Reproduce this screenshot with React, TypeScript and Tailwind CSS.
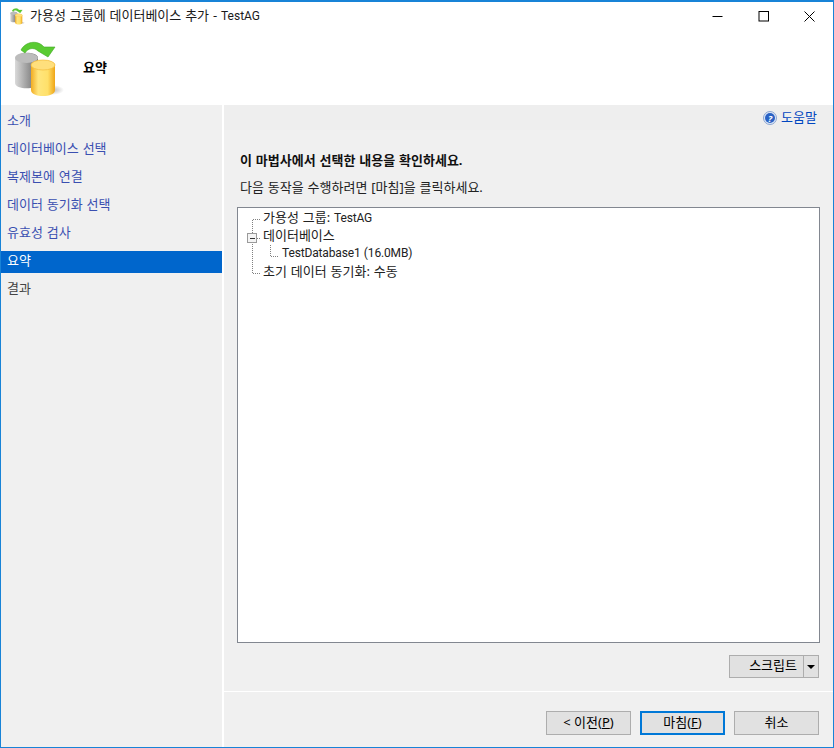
import React from 'react';

const FONT = "font-['Noto_Sans','Noto_Sans_CJK_KR',sans-serif]";

const pages = ['소개', '데이터베이스 선택', '복제본에 연결', '데이터 동기화 선택', '유효성 검사', '요약', '결과'];

// Latin runs are narrower than the Korean text around them
const L: React.FC<{ children: React.ReactNode }> = ({ children }) => (
  <span className="font-['Roboto',sans-serif] text-[12px]">{children}</span>
);

const TreeL: React.FC<{ children: React.ReactNode }> = ({ children }) => (
  <span className="font-['Roboto',sans-serif] text-[12px] tracking-[-0.15px]">{children}</span>
);

// Wizard icon: grey and yellow cylinders under a green arrow
const DbIcon: React.FC<{ w: number; h: number; id: string }> = ({ w, h, id }) => (
  <svg width={w} height={h} viewBox="0 0 50 56">
    <defs>
      <linearGradient id={`${id}g`} x1="0" x2="1" y1="0" y2="0">
        <stop offset="0" stopColor="#dadada" />
        <stop offset="0.45" stopColor="#a6a6a6" />
        <stop offset="1" stopColor="#686868" />
      </linearGradient>
      <linearGradient id={`${id}y`} x1="0" x2="1" y1="0" y2="0">
        <stop offset="0" stopColor="#f2ac22" />
        <stop offset="0.3" stopColor="#ffe67e" />
        <stop offset="0.7" stopColor="#ffe06a" />
        <stop offset="1" stopColor="#efa516" />
      </linearGradient>
      <radialGradient id={`${id}s`} cx="0.5" cy="0.5" r="0.5">
        <stop offset="0" stopColor="#888" stopOpacity="0.6" />
        <stop offset="1" stopColor="#888" stopOpacity="0" />
      </radialGradient>
    </defs>
    <ellipse cx="38" cy="49" rx="12" ry="5" fill={`url(#${id}s)`} />
    <path d="M1 17 C1 10 24 10 24 17 V42 C24 49 1 49 1 42 Z" fill={`url(#${id}g)`} />
    <ellipse cx="12.5" cy="17" rx="11.5" ry="5" fill="#bcbcbc" />
    <path d="M17 25 C17 17 41 17 41 25 V49 C41 57 17 57 17 49 Z" fill={`url(#${id}y)`} />
    <ellipse cx="29" cy="24" rx="12" ry="5" fill="#ffdf7c" stroke="#f3bb3c" strokeWidth="0.7" />
    <path d="M7 9 C11 1 23 -2 30 6 L41 6 L34 16 L24 10 C20 6 14 7 11 12 Z" fill="#5acb32" stroke="#3fa822" strokeWidth="0.6" />
  </svg>
);

const Help = () => (
  <svg width="14" height="14" viewBox="0 0 14 14">
    <circle cx="7" cy="7" r="6.5" fill="#dfe8f7" stroke="#8aa4d0" />
    <circle cx="7" cy="7" r="5" fill="#2a62c4" />
    <text x="7" y="10.5" textAnchor="middle" fontSize="9" fontStyle="italic" fontWeight="700" fill="#fff">?</text>
  </svg>
);

const TreeLines = () => (
  <svg className="absolute left-0 top-0" width="60" height="80" shapeRendering="crispEdges">
    <g stroke="#808080" strokeWidth="1" strokeDasharray="1 1" fill="none">
      <path d="M14.5 11.5 V65.5 H22" />
      <path d="M14.5 11.5 H22" />
      <path d="M18.5 30.5 H22" />
      <path d="M32.5 37 V48.5 H41" />
    </g>
    <rect x="9.5" y="25.5" width="9" height="9" fill="#f4f4f4" stroke="#9a9a9a" />
    <path d="M11.5 30.5 H16.5" stroke="#333" />
  </svg>
);

const Btn: React.FC<{ children: React.ReactNode; primary?: boolean }> = ({ children, primary }) => (
  <button className={primary
    ? 'w-[85px] h-[24px] pb-[2px] bg-[#e1e1e1] border-2 border-[#0078d7] text-[13px] text-black'
    : 'w-[85px] h-[24px] pb-[2px] bg-[#e1e1e1] border border-[#adadad] text-[13px] text-black'}>
    {children}
  </button>
);

export default function App() {
  return (
    <div className={`${FONT} w-[834px] h-[748px] flex flex-col bg-white border border-[#1883d7] border-t-2 text-[13px] leading-none [word-spacing:0.5px] overflow-hidden`}>
      {/* Title bar */}
      <div className="h-[28px] shrink-0 flex items-center pl-[9px] bg-white">
        <DbIcon w={15} h={17} id="small" />
        <span className="ml-[5px] mb-[2px] text-[#1a1a1a]">가용성 그룹에 데이터베이스 추가 - <L>TestAG</L></span>
        <div className="ml-auto flex items-center gap-[35px] pr-[18px]">
          <svg width="11" height="11" viewBox="0 0 11 11"><path d="M0.5 5.5 H10.5" stroke="#000" /></svg>
          <svg width="11" height="11" viewBox="0 0 11 11"><rect x="1" y="0.5" width="9.5" height="9.5" fill="none" stroke="#000" /></svg>
          <svg width="11" height="11" viewBox="0 0 11 11"><path d="M0.5 0.5 L10.5 10.5 M10.5 0.5 L0.5 10.5" stroke="#000" /></svg>
        </div>
      </div>

      {/* Header */}
      <div className="h-[75px] shrink-0 flex items-center bg-white pl-[13px] pt-[2px]">
        <DbIcon w={50} h={56} id="big" />
        <span className="ml-[19px] mb-[2px] font-bold text-black">요약</span>
      </div>

      <div className="flex-1 flex min-h-0">
        {/* Page list */}
        <div className="w-[221px] shrink-0 bg-[#f0f0f0] pt-[6px]">
          {pages.map((p) => (
            <div
              key={p}
              className={p === '요약'
                ? 'h-[22px] mb-[6px] pl-[6px] pb-[4px] flex items-center bg-[#0066cc] text-white'
                : p === '결과'
                  ? 'h-[22px] mb-[6px] pl-[6px] pb-[4px] flex items-center text-[#444444]'
                  : 'h-[22px] mb-[6px] pl-[6px] pb-[4px] flex items-center text-[#3a4fb0]'}
            >
              {p}
            </div>
          ))}
        </div>
        <div className="w-[2px] shrink-0 bg-white" />

        {/* Content */}
        <div className="flex-1 flex flex-col bg-[#f0f0f0] min-w-0">
          <div className="h-[25px] shrink-0 bg-[#eeeeee] flex items-center justify-end pr-[16px] gap-[4px]">
            <Help />
            <span className="text-[#0046c0]">도움말</span>
          </div>
          <div className="flex-1 flex flex-col px-[13px] min-h-0 bg-[#f0f0f0]">
            <div className="mt-[24px] pl-[3px] font-bold text-[#111]">이 마법사에서 선택한 내용을 확인하세요.</div>
            <div className="mt-[14px] pl-[3px] text-[#222]">다음 동작을 수행하려면 [마침]을 클릭하세요.</div>
            <div className="relative mt-[13px] h-[436px] bg-white border border-[#828790] text-[#222]">
              <TreeLines />
              <div className="h-[18px] pl-[25px] flex items-center"><span>가용성 그룹: <TreeL>TestAG</TreeL></span></div>
              <div className="h-[18px] pl-[25px] flex items-center">데이터베이스</div>
              <div className="h-[18px] pl-[44px] flex items-center"><TreeL>TestDatabase1 (16.0MB)</TreeL></div>
              <div className="h-[18px] pl-[25px] flex items-center">초기 데이터 동기화: 수동</div>
            </div>
            <div className="mt-[12px] flex justify-end pr-[1px]">
              <div className="w-[90px] h-[23px] bg-[#e1e1e1] border border-[#adadad] flex items-stretch text-black">
                <div className="flex-1 flex items-center justify-end pr-[6px] pb-[2px]">스크립트</div>
                <div className="w-[15px] border-l border-[#adadad] flex items-center justify-center">
                  <svg width="8" height="4" viewBox="0 0 8 4"><path d="M0 0 H8 L4 4 Z" fill="#000" /></svg>
                </div>
              </div>
            </div>
          </div>
          <div className="h-px shrink-0 bg-white mt-[12px]" />
          <div className="h-[55px] shrink-0 flex justify-end items-start gap-[9px] pr-[14px] pt-[19px]">
            <Btn>&lt; 이전(<u>P</u>)</Btn>
            <Btn primary>마침(<u>F</u>)</Btn>
            <Btn>취소</Btn>
          </div>
        </div>
      </div>
    </div>
  );
}
